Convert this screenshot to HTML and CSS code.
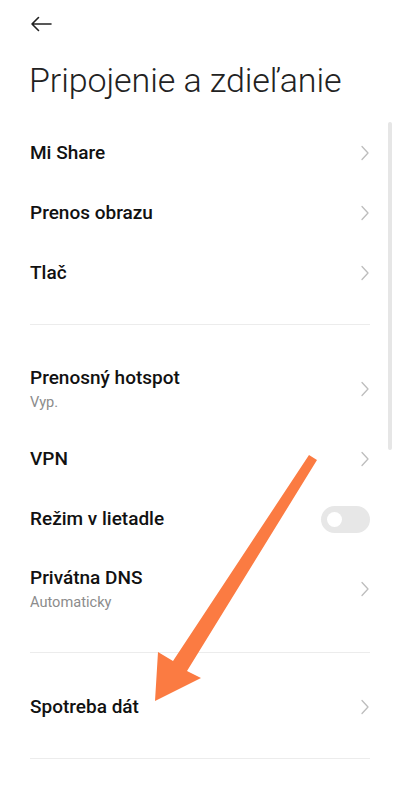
FILE: index.html
```html
<!DOCTYPE html>
<html lang="sk">
<head>
  <meta charset="UTF-8" />
  <meta name="viewport" content="width=device-width, initial-scale=1.0"/>
  <title>Pripojenie a zdieľanie</title>
  <link rel="stylesheet" href="styles.css">
</head>
<body>
  <div class="screen">
    <!-- Header -->
    <div class="header">
      <div class="back">
        <svg width="22" height="16" viewBox="0 0 22 16">
          <path d="M21 8H2M8.5 1.5L2 8l6.5 6.5" fill="none" stroke="#222" stroke-width="1.6" stroke-linecap="round" stroke-linejoin="round"/>
        </svg>
      </div>
      <h1>Pripojenie a zdieľanie</h1>
    </div>

    <div class="section">
      <div class="row"><span class="label">Mi Share</span><svg class="chevron" viewBox="0 0 8 16"><path d="M1 1.5L7 8l-6 6.5"/></svg></div>
      <div class="row"><span class="label">Prenos obrazu</span><svg class="chevron" viewBox="0 0 8 16"><path d="M1 1.5L7 8l-6 6.5"/></svg></div>
      <div class="row"><span class="label">Tlač</span><svg class="chevron" viewBox="0 0 8 16"><path d="M1 1.5L7 8l-6 6.5"/></svg></div>
    </div>

    <div class="section middle">
      <div class="row tall">
        <div class="text">
          <span class="label">Prenosný hotspot</span>
          <span class="sub">Vyp.</span>
        </div>
        <svg class="chevron" viewBox="0 0 8 16"><path d="M1 1.5L7 8l-6 6.5"/></svg>
      </div>
      <div class="row"><span class="label">VPN</span><svg class="chevron" viewBox="0 0 8 16"><path d="M1 1.5L7 8l-6 6.5"/></svg></div>
      <div class="row"><span class="label">Režim v lietadle</span><span class="toggle"></span></div>
      <div class="row tall">
        <div class="text">
          <span class="label">Privátna DNS</span>
          <span class="sub">Automaticky</span>
        </div>
        <svg class="chevron" viewBox="0 0 8 16"><path d="M1 1.5L7 8l-6 6.5"/></svg>
      </div>
    </div>

    <div class="section">
      <div class="row"><span class="label">Spotreba dát</span><svg class="chevron" viewBox="0 0 8 16"><path d="M1 1.5L7 8l-6 6.5"/></svg></div>
    </div>

    <div class="scrollbar"></div>

    <!-- annotation arrow -->
    <svg class="pointer" width="400" height="793" viewBox="0 0 400 793">
      <polygon points="309,455 317,460 187,671 201,678 155,701 158,652 173,661" fill="#fb7b42"/>
    </svg>
  </div>
</body>
</html>
```

FILE: styles.css
```css
* {
  margin: 0;
  padding: 0;
  box-sizing: border-box;
}

body {
  background: #fff;
  font-family: Roboto, "Noto Sans", Arial, sans-serif;
  color: #111;
}

.screen {
  position: relative;
  width: 400px;
  height: 793px;
  overflow: hidden;
}

.header {
  height: 99px;
  padding: 0 29px;
}

.back {
  height: 48px;
  display: flex;
  align-items: center;
  padding-left: 1px;
}

.back svg {
  display: block;
}

h1 {
  font-size: 34px;
  font-weight: 300;
  color: #222;
  line-height: 40px;
  margin-top: 12px;
  letter-spacing: -0.1px;
}

.section {
  margin: 0 30px;
  padding: 24px 0 21px;
  border-bottom: 1px solid #ececec;
}

.section.middle {
  padding-bottom: 23px;
}

.row {
  height: 60px;
  display: flex;
  align-items: center;
  justify-content: space-between;
}

.row.tall {
  height: 80px;
}

.text {
  display: flex;
  flex-direction: column;
  gap: 2px;
}

.label {
  font-size: 19px;
  font-weight: 500;
  line-height: 24px;
  color: #111;
}

.sub {
  font-size: 14.6px;
  line-height: 20px;
  color: #8c8c8c;
}

.chevron {
  width: 8px;
  height: 16px;
  margin-right: 1px;
  fill: none;
  stroke: #bdbdbd;
  stroke-width: 1.3;
  stroke-linecap: round;
  stroke-linejoin: round;
}

.toggle {
  position: relative;
  width: 49px;
  height: 27px;
  border-radius: 14px;
  background: #e7e7e7;
}

.toggle::after {
  content: "";
  position: absolute;
  left: 6px;
  top: 6px;
  width: 15px;
  height: 15px;
  border-radius: 50%;
  background: #fff;
}

.scrollbar {
  position: absolute;
  left: 388px;
  top: 122px;
  width: 4px;
  height: 328px;
  border-radius: 2px;
  background: #e6e6e6;
}

.pointer {
  position: absolute;
  left: 0;
  top: 0;
}
```
